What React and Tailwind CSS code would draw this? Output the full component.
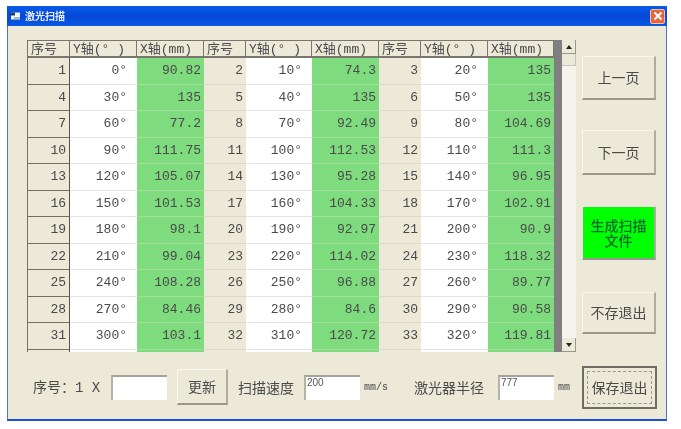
import React from 'react';

const mono = 'font-["Liberation_Mono","Noto_Sans_CJK_SC",monospace]';
const cjk = 'font-["Noto_Sans_CJK_SC",sans-serif]';

const rows = [
  [1, '0°', '90.82', 2, '10°', '74.3', 3, '20°', '135'],
  [4, '30°', '135', 5, '40°', '135', 6, '50°', '135'],
  [7, '60°', '77.2', 8, '70°', '92.49', 9, '80°', '104.69'],
  [10, '90°', '111.75', 11, '100°', '112.53', 12, '110°', '111.3'],
  [13, '120°', '105.07', 14, '130°', '95.28', 15, '140°', '96.95'],
  [16, '150°', '101.53', 17, '160°', '104.33', 18, '170°', '102.91'],
  [19, '180°', '98.1', 20, '190°', '92.97', 21, '200°', '90.9'],
  [22, '210°', '99.04', 23, '220°', '114.02', 24, '230°', '118.32'],
  [25, '240°', '108.28', 26, '250°', '96.88', 27, '260°', '89.77'],
  [28, '270°', '84.46', 29, '280°', '84.6', 30, '290°', '90.58'],
  [31, '300°', '103.1', 32, '310°', '120.72', 33, '320°', '119.81'],
  ['', '', '', '', '', '', '', '', ''],
];

const headers = ['序号', 'Y轴(° )', 'X轴(mm)', '序号', 'Y轴(° )', 'X轴(mm)', '序号', 'Y轴(° )', 'X轴(mm)'];

const cellTone = [
  'bg-[#ece9d8] border-b border-[#dcd9c8]',
  'bg-white border-b border-[#e4e4e4]',
  'bg-[#7edc7e] border-b border-[#a5dea0]',
];

const Cell = ({ value, index }) => {
  const tone = cellTone[index % 3];
  const isFirstCol = index === 0;
  return (
    <div
      className={`flex items-center justify-end pr-[3px] h-[26.5px] text-[13px] text-[#4a4a4a] ${tone} ${
        isFirstCol ? 'border-l border-r border-b-[#6f6f68] border-l-[#77776f] border-r-[#55554f]' : ''
      }`}
    >
      <span className={index % 3 === 1 ? 'pr-[7px]' : ''}>{value}</span>
    </div>
  );
};

const SideButton = ({ label, className = '' }) => (
  <div
    className={`flex items-center justify-center text-center w-[74px] bg-[#ece9d8] border-t border-l border-t-[#f8f7f0] border-l-[#f8f7f0] border-b-2 border-r-2 border-b-[#9a988c] border-r-[#aeac9f] text-[14px] leading-[15px] text-[#4a4a4a] ${cjk} ${className}`}
  >
    {label}
  </div>
);

const TextBox = ({ value, className = '' }) => (
  <div
    className={`h-[25px] bg-white border-t-2 border-l-2 border-t-[#a5a397] border-l-[#b5b3a7] text-[10px] leading-[11px] text-[#555] pl-px font-["Liberation_Sans",sans-serif] ${className}`}
  >
    {value}
  </div>
);

export default function App() {
  return (
    <div className="w-[681px] h-[429px] bg-white pt-[6px] pl-[7px] overflow-hidden blur-[0.6px]">
      <div className="w-[660px] h-[415px] flex flex-col bg-[#ece9d8] border-x border-b-2 border-x-[#4a76d8] border-b-[#1c50d0]">
        {/* title bar */}
        <div className="h-[20px] shrink-0 -mx-px flex items-center justify-between pl-[4px] pr-[2px] bg-gradient-to-b from-[#0a5ce8] via-[#0548d8] to-[#0a58e4]">
          <div className="flex items-center gap-[5px]">
            <svg width="9" height="8" viewBox="0 0 9 8">
              <rect x="0" y="0.5" width="9" height="7" fill="#f4f4f4" />
              <rect x="0" y="0.5" width="4" height="3" fill="#1c3a60" />
              <rect x="3" y="5" width="6" height="2" fill="#9db8c8" />
            </svg>
            <span className={`text-[10px] font-bold leading-none text-[#e8eefc] ${cjk}`}>激光扫描</span>
          </div>
          <div className="w-[15px] h-[15px] rounded-[2px] bg-[#e2683c] border border-[#f2c0a8] flex items-center justify-center">
            <svg width="10" height="10" viewBox="0 0 10 10">
              <path d="M1.5 1.5L8.5 8.5M8.5 1.5L1.5 8.5" stroke="#fff" strokeWidth="2" />
            </svg>
          </div>
        </div>

        {/* table and right buttons */}
        <div className="flex pt-[14px] pl-[19px]">
          <div className="flex h-[312px] w-[549px] shrink-0">
            <div className={`w-[527px] h-[312px] overflow-hidden grid grid-cols-[43px_67px_67px_42px_66px_67px_42px_67px_66px] auto-rows-min ${mono}`}>
              {headers.map((h, i) => (
                <div
                  key={i}
                  className={`h-[18px] bg-[#ece9d8] border-t border-r border-b-2 border-t-[#77776f] border-r-[#77776f] border-b-[#77776f] text-[13px] leading-[17px] pl-[3px] whitespace-nowrap overflow-hidden text-[#4a4a4a] ${
                    i === 0 ? 'border-l border-l-[#77776f]' : ''
                  }`}
                >
                  {h}
                </div>
              ))}
              {rows.map((row, r) =>
                row.map((value, c) => <Cell key={`${r}-${c}`} value={value} index={c} />)
              )}
            </div>
            <div className="w-[8px] bg-[#7f7f7f]" />
            <div className="w-[14px] flex flex-col bg-[#f4f3ec]">
              <div className="h-[14px] bg-[#ece9d8] border-r border-b border-[#9a988c] flex items-center justify-center">
                <svg width="6" height="4" viewBox="0 0 6 4"><path d="M3 0L6 4H0Z" fill="#222" /></svg>
              </div>
              <div className="h-[12px] bg-[#ece9d8] border-r border-b border-[#c6c4b6]" />
              <div className="flex-1" />
              <div className="h-[14px] bg-[#ece9d8] border-r border-b border-[#9a988c] flex items-center justify-center">
                <svg width="6" height="4" viewBox="0 0 6 4"><path d="M0 0H6L3 4Z" fill="#222" /></svg>
              </div>
            </div>
          </div>
          <div className="flex flex-col items-end w-[79px] ml-[1px] pt-[16px]">
            <SideButton label="上一页" className="h-[44px]" />
            <SideButton label="下一页" className="h-[45px] mt-[30px]" />
            <SideButton
              label={<>生成扫描<br />文件</>}
              className="h-[54px] w-[72px] mt-[31px] !bg-[#00ff00] !text-[#063] font-medium"
            />
            <SideButton label="不存退出" className="h-[42px] mt-[32px]" />
          </div>
        </div>

        {/* bottom row */}
        <div className={`flex items-center pl-[25px] mt-[14px] h-[42px] text-[#4a4a4a] ${cjk}`}>
          <span className="w-[78px] text-[14px] whitespace-nowrap">
            序号：<span className={mono}>1 X</span>
          </span>
          <TextBox className="w-[56px]" />
          <div className="w-[51px] h-[36px] ml-[10px] flex items-center justify-center bg-[#ece9d8] border-t border-l border-t-[#f8f7f0] border-l-[#f8f7f0] border-b-2 border-r-2 border-b-[#9a988c] border-r-[#aeac9f] text-[14px]">
            更新
          </div>
          <span className="ml-[10px] w-[66px] text-[14px] whitespace-nowrap">扫描速度</span>
          <TextBox value="200" className="w-[56px]" />
          <span className={`ml-[4px] w-[50px] text-[10px] ${mono}`}>mm/s</span>
          <span className="w-[84px] text-[14px] whitespace-nowrap">激光器半径</span>
          <TextBox value="777" className="w-[56px]" />
          <span className={`ml-[4px] w-[24px] text-[10px] ${mono}`}>mm</span>
          <div className="w-[75px] h-[43px] p-[3px] bg-[#ece9d8] border-2 border-[#6f6e66]">
            <div className="w-full h-full flex items-center justify-center border border-dashed border-[#9a988c] text-[14px] whitespace-nowrap">
              保存退出
            </div>
          </div>
        </div>
      </div>
    </div>
  );
}
